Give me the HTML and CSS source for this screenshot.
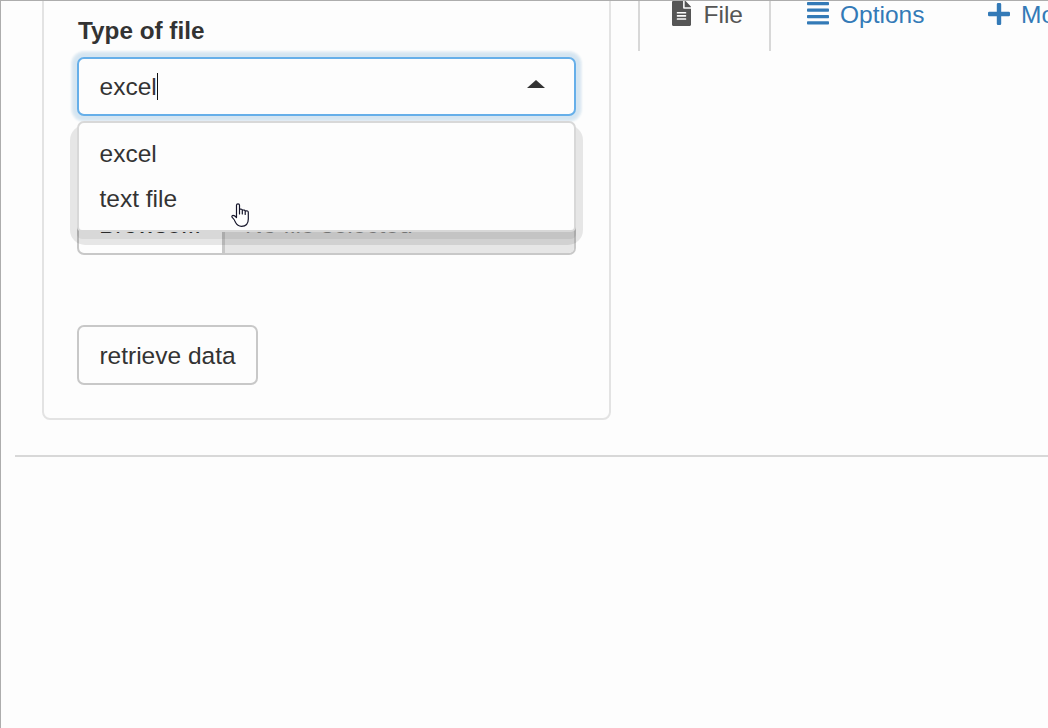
FILE: index.html
```
<!DOCTYPE html>
<html lang="en">
<head>
<meta charset="utf-8">
<title>Import data</title>
<link rel="stylesheet" href="styles.css">
</head>
<body>
<div class="app">
  <div class="layout">
    <form class="panel">
      <div class="label">Type of file</div>
      <div class="select-wrap">
        <div class="select">
          <span class="value">excel</span><span class="caret"></span>
          <span class="arrow"></span>
        </div>
        <div class="menu">
          <div class="option">excel</div>
          <div class="option">text file</div>
        </div>
      </div>
      <div class="upload">
        <span class="browse">Browse...</span>
        <span class="filename">No file selected</span>
      </div>
      <button type="button" class="button">retrieve data</button>
    </form>
    <nav class="tabs">
      <a class="tab active">
        <svg class="icon-file" viewBox="0 0 384 512" preserveAspectRatio="none"><path fill="currentColor" d="M224 136V0H24C11 0 0 11 0 24v464c0 13 11 24 24 24h336c13 0 24-11 24-24V160H248c-13 0-24-11-24-24zm64 236c0 7-5 12-12 12H108c-7 0-12-5-12-12v-8c0-7 5-12 12-12h168c7 0 12 5 12 12v8zm0-64c0 7-5 12-12 12H108c-7 0-12-5-12-12v-8c0-7 5-12 12-12h168c7 0 12 5 12 12v8zm0-72v8c0 7-5 12-12 12H108c-7 0-12-5-12-12v-8c0-7 5-12 12-12h168c7 0 12 5 12 12zm96-114v6H256V0h6c6 0 12 3 17 7l98 98c4 5 7 11 7 17z"/></svg>
        <span>File</span>
      </a>
      <a class="tab options">
        <svg class="icon-list" viewBox="0 0 22 23"><g fill="currentColor"><rect y="0" width="22" height="3.3" rx=".8"/><rect y="6.5" width="22" height="3.3" rx=".8"/><rect y="13" width="22" height="3.3" rx=".8"/><rect y="19.3" width="22" height="3.3" rx=".8"/></g></svg>
        <span>Options</span>
      </a>
      <a class="tab more">
        <svg class="icon-plus" viewBox="0 0 22 22"><path fill="currentColor" d="M10 0h2q1.200 0 1.200 1.200V8.800h7.600q1.200 0 1.200 1.200v2q0 1.200-1.200 1.200h-7.600v7.600q0 1.200-1.200 1.200h-2q-1.200 0-1.200-1.200v-7.600H1.200Q0 13.200 0 12v-2q0-1.200 1.200-1.200h7.600V1.200Q8.800 0 10 0z"/></svg>
        <span>More</span>
      </a>
    </nav>
  </div>
  <div class="rule"></div>
  <svg class="pointer" viewBox="0 0 18 24"><path fill="#fff" stroke="#15152a" stroke-width="1.200" stroke-linejoin="round" stroke-linecap="round" d="M5.500 14.500V2.200Q5.500.8 7 .8T8.500 2.200V6.200Q11.200 5.700 11.300 7.200Q13.800 6.500 14.200 8Q17.300 7.400 17.300 9.500V16Q17.300 23.300 10.500 23.300Q6.500 23.300 4.600 19.500Q3.600 16.500 1.200 14.400Q.4 13.100 1.600 12.500Q3.400 12.200 5.500 14.500M8.500 6.200V11M11.300 7.200V11M14.200 8V11.500"/></svg>
</div>
</body>
</html>
```

FILE: styles.css
```
* { box-sizing: border-box; }

body {
  margin: 0;
  background: #fdfdfd;
  color: #333;
  font: 24.5px/35px "Liberation Sans", Arial, sans-serif;
}

.app {
  position: relative;
  width: 1048px;
  height: 728px;
  overflow: hidden;
  border-top: 1px solid #adadad;
  border-left: 1px solid #adadad;
}

.layout { display: flex; align-items: flex-start; }

.panel {
  flex: none;
  width: 569px;
  height: 429px;
  margin: -10px 0 0 41px;
  padding: 20px 33px 0;
  border: 2px solid #e3e3e3;
  border-radius: 8px;
}

.label { height: 44px; padding-left: 1px; font-size: 24.300px; font-weight: bold; }

.select-wrap { position: relative; z-index: 1; }

/* soft shadow around the open menu */
.select-wrap::before {
  content: "";
  position: absolute;
  top: 68px;
  left: -7px;
  right: -7px;
  height: 120px;
  border-radius: 15px;
  background: rgba(0, 0, 0, .09);
}

.select {
  display: flex;
  align-items: center;
  height: 59px;
  padding: 0 29px 0 20.500px;
  border: 2px solid #66afe9;
  border-radius: 7px;
  background: #fdfdfd;
  box-shadow: 0 0 2px 4px #d5e5f1, 0 0 2px 6px #e5eef4;
}

.caret { width: 1px; height: 27px; background: #111; }

.arrow {
  margin: -5px 0 0 auto;
  border: solid transparent;
  border-width: 0 9px 8px;
  border-bottom-color: #333;
}

.menu {
  position: absolute;
  top: 64px;
  left: 0;
  width: 100%;
  height: 111px;
  padding: 8px 20.500px;
  border: 2px solid #d8d8d8;
  border-radius: 7px 7px 5px 5px;
  background: #fdfdfd;
  box-shadow: 0 7px 0 0 rgba(0, 0, 0, .06);
}

.option { height: 45px; line-height: 45px; }

.upload {
  display: flex;
  height: 60px;
  margin-top: 79px;
  border: 2px solid #c8c8c8;
  border-radius: 7px;
  overflow: hidden;
  line-height: 56px;
}

.browse { width: 146px; padding-left: 20px; border-right: 3px solid #c8c8c8; }

.filename { flex: 1; padding-left: 20px; background: #e6e6e6; color: #888; }

.button {
  display: block;
  width: 181px;
  height: 60px;
  margin-top: 70px;
  padding: 0;
  border: 2px solid #c8c8c8;
  border-radius: 7px;
  background: #fdfdfd;
  color: #333;
  font: inherit;
}

.tabs { display: flex; flex: none; margin-left: 27px; color: #337ab7; }

.tab { display: flex; flex: none; height: 50px; line-height: 28px; }

.active {
  width: 133px;
  padding-left: 32px;
  border: solid #d8d8d8;
  border-width: 0 2px;
  color: #555;
}

.icon-file { width: 19px; height: 25px; margin-right: 12.500px; }
.options { width: 217px; padding-left: 36px; }
.icon-list { width: 22px; height: 23px; margin: 1px 11px 0 0; }
.icon-plus { width: 22px; height: 22px; margin: 2px 11px 0 0; }

.rule { height: 2px; margin: 35px 0 0 14px; background: #d8d8d8; }

.pointer { position: absolute; z-index: 2; top: 202px; left: 230px; width: 18px; height: 24px; }
```
